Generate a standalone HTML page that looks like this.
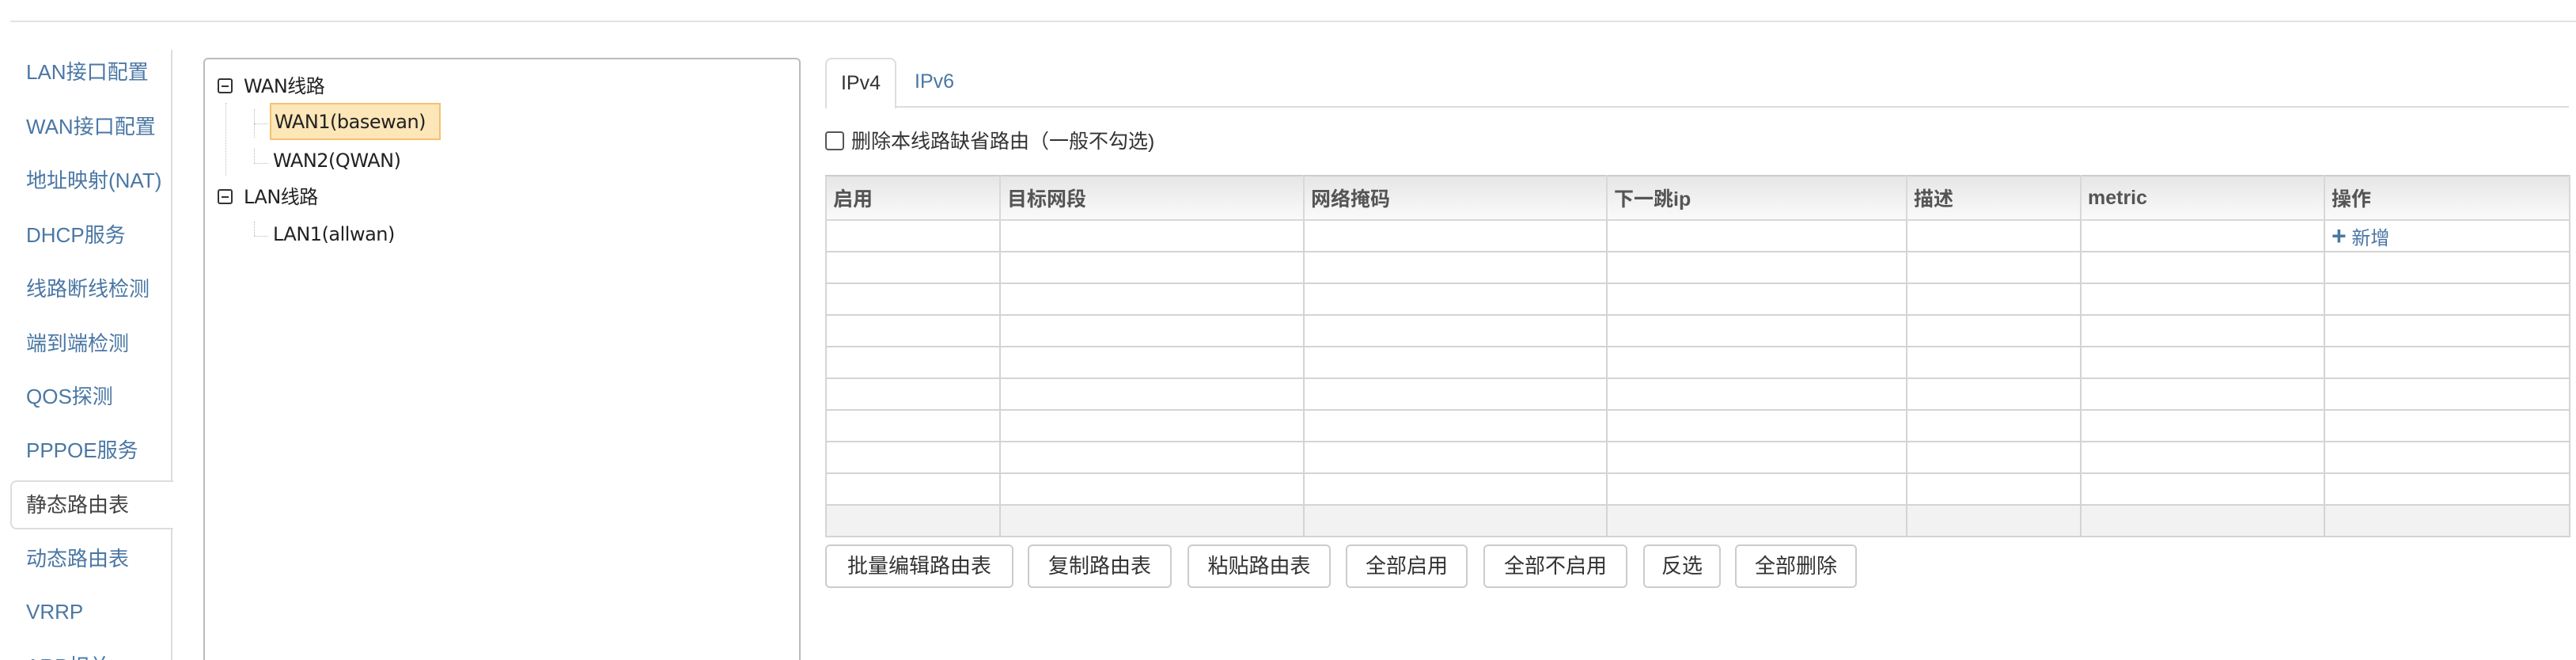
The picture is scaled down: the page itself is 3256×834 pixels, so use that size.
<!DOCTYPE html>
<html><head><meta charset="utf-8"><style>
*{box-sizing:border-box;margin:0;padding:0}
html,body{width:3256px;height:834px;overflow:hidden;background:#fff}
body{font-family:"Liberation Sans","Noto Sans CJK SC",sans-serif}
#w{position:relative;width:3256px;height:834px;overflow:hidden}
.a{position:absolute}
.top{left:13px;top:26px;width:3243px;height:2px;background:#e2e2e2}
.sb{left:216px;top:63px;width:2px;height:771px;background:#ddd}
.si{position:absolute;left:33px;font-size:26px;color:#4a77a4;line-height:30px;transform:translateY(-15px);white-space:nowrap}
.act{left:13px;top:607px;width:206px;height:62px;border:2px solid #ddd;border-right:none;border-radius:8px 0 0 8px;background:#fff}
.tree{left:257px;top:73px;width:755px;height:761px;border:2px solid #bbb;border-bottom:none;border-radius:6px 6px 0 0}
.tt{position:absolute;font-size:24px;color:#222;line-height:28px;transform:translateY(-14px);white-space:nowrap;font-family:"DejaVu Sans","Noto Sans CJK SC",sans-serif;letter-spacing:-0.5px}
.mi{position:absolute;width:19px;height:19px;border:2px solid #333;border-radius:3px}
.mi:after{content:"";position:absolute;left:3px;right:3px;top:7px;height:2px;background:#333}
.dot{position:absolute;border-left:1px dotted #bbb}
.doth{position:absolute;border-top:1px dotted #bbb}
.tab{left:1043px;top:73px;width:90px;height:64px;border:2px solid #ddd;border-bottom:none;border-radius:8px 8px 0 0;background:#fff;font-size:25px;color:#333;text-align:center;line-height:60px}
.tl{left:1043px;top:134px;width:2204px;height:2px;background:#ddd}
table{position:absolute;left:1043px;top:221px;border-collapse:collapse;table-layout:fixed}
td,th{border:2px solid #d4d4d4;height:40px;padding:0 8px;text-align:left;font-size:25px}
th{height:56px;background:linear-gradient(#e6e6e6,#fafafa);color:#555;border-color:#ccc #d8d8d8 #d8d8d8}
tr.f td{background:#f2f2f2}
.btn{position:absolute;top:688px;height:55px;border:2px solid #ccc;border-radius:6px;font-size:26px;color:#333;text-align:center;line-height:51px;background:#fff}
</style></head><body><div id="w">
<div class="a top"></div>
<div class="a sb"></div>
<div class="a act"></div>
<div class="si" style="top:91px">LAN接口配置</div>
<div class="si" style="top:160px">WAN接口配置</div>
<div class="si" style="top:228px">地址映射(NAT)</div>
<div class="si" style="top:297px">DHCP服务</div>
<div class="si" style="top:365px">线路断线检测</div>
<div class="si" style="top:434px">端到端检测</div>
<div class="si" style="top:501px">QOS探测</div>
<div class="si" style="top:569px">PPPOE服务</div>
<div class="si" style="top:638px;color:#444">静态路由表</div>
<div class="si" style="top:706px">动态路由表</div>
<div class="si" style="top:773px">VRRP</div>
<div class="si" style="top:842px">ARP相关</div>

<div class="a tree"></div>
<div class="mi" style="left:275px;top:99px"></div>
<div class="tt" style="left:308px;top:109px">WAN线路</div>
<div class="dot" style="left:285px;top:130px;height:92px"></div>
<div class="dot" style="left:321px;top:138px;height:36px"></div>
<div class="doth" style="left:321px;top:156px;width:18px"></div>
<div class="a" style="left:341px;top:130px;width:216px;height:47px;background:#fde6b8;border:2px solid #f5c070"></div>
<div class="tt" style="left:347px;top:154px">WAN1(basewan)</div>
<div class="dot" style="left:321px;top:188px;height:18px"></div>
<div class="doth" style="left:321px;top:206px;width:18px"></div>
<div class="tt" style="left:345px;top:203px">WAN2(QWAN)</div>
<div class="mi" style="left:275px;top:239px"></div>
<div class="tt" style="left:308px;top:249px">LAN线路</div>
<div class="dot" style="left:321px;top:280px;height:18px"></div>
<div class="doth" style="left:321px;top:298px;width:18px"></div>
<div class="tt" style="left:345px;top:296px">LAN1(allwan)</div>

<div class="a tl"></div>
<div class="a tab">IPv4</div>
<div class="a" style="left:1156px;top:88px;font-size:25px;color:#4a77a4;line-height:30px">IPv6</div>
<div class="a" style="left:1043px;top:166px;width:24px;height:24px;border:2px solid #555;border-radius:4px"></div>
<div class="a" style="left:1076px;top:164px;font-size:25px;color:#333;line-height:30px">删除本线路缺省路由（一般不勾选)</div>

<table>
<colgroup><col style="width:220px"><col style="width:384px"><col style="width:383px"><col style="width:379px"><col style="width:220px"><col style="width:308px"><col style="width:310px"></colgroup>
<tr><th>启用</th><th>目标网段</th><th>网络掩码</th><th>下一跳ip</th><th>描述</th><th>metric</th><th>操作</th></tr>
<tr><td></td><td></td><td></td><td></td><td></td><td></td><td style="color:#4a77a4;font-size:24px"><b style="font-size:32px;line-height:20px">+</b> 新增</td></tr>
<tr><td></td><td></td><td></td><td></td><td></td><td></td><td></td></tr>
<tr><td></td><td></td><td></td><td></td><td></td><td></td><td></td></tr>
<tr><td></td><td></td><td></td><td></td><td></td><td></td><td></td></tr>
<tr><td></td><td></td><td></td><td></td><td></td><td></td><td></td></tr>
<tr><td></td><td></td><td></td><td></td><td></td><td></td><td></td></tr>
<tr><td></td><td></td><td></td><td></td><td></td><td></td><td></td></tr>
<tr><td></td><td></td><td></td><td></td><td></td><td></td><td></td></tr>
<tr><td></td><td></td><td></td><td></td><td></td><td></td><td></td></tr>
<tr class="f"><td></td><td></td><td></td><td></td><td></td><td></td><td></td></tr>
</table>

<div class="btn" style="left:1043px;width:238px">批量编辑路由表</div>
<div class="btn" style="left:1299px;width:182px">复制路由表</div>
<div class="btn" style="left:1501px;width:181px">粘贴路由表</div>
<div class="btn" style="left:1701px;width:154px">全部启用</div>
<div class="btn" style="left:1875px;width:182px">全部不启用</div>
<div class="btn" style="left:2077px;width:98px">反选</div>
<div class="btn" style="left:2193px;width:154px">全部删除</div>
</div></body></html>
